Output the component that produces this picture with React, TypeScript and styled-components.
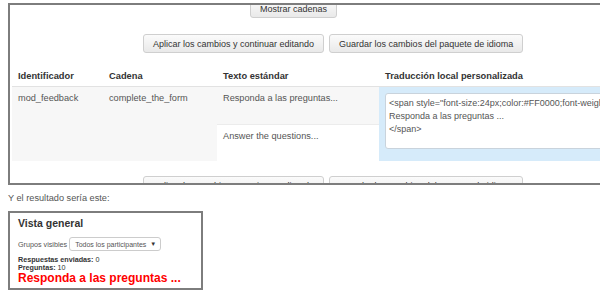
import React from 'react'
import styled, { createGlobalStyle } from 'styled-components'

const Global = createGlobalStyle`
  html, body {
    margin: 0;
    padding: 0;
    background: #fff;
    font-family: "Liberation Sans", Arial, sans-serif;
    color: #333;
  }
`

const Page = styled.div`
  width: 600px;
  height: 290px;
  overflow: hidden;
  padding: 3px 0 0 8px;
  box-sizing: border-box;
`

const Shot = styled.div`
  width: 640px;
  height: 182px;
  box-sizing: border-box;
  border: 2px solid #7d7d7d;
  overflow: hidden;
  background: #fff;
`

const Inner = styled.div`
  margin-top: -6px;
`

const ButtonRow = styled.div<{ $left: number; $top: number }>`
  display: flex;
  gap: 5px;
  padding-left: ${(p) => p.$left}px;
  margin-top: ${(p) => p.$top}px;
`

const Button = styled.div`
  height: 19px;
  box-sizing: border-box;
  padding: 0 9px;
  display: flex;
  align-items: center;
  font-size: 9px;
  color: #333;
  border: 1px solid #cfcfcf;
  border-radius: 3px;
  background: linear-gradient(#fbfbfb, #e9e9e9);
  white-space: nowrap;
`

const Table = styled.div`
  margin: 12px 0 0 2px;
  display: grid;
  grid-template-columns: 91px 114px 162px 1fr;
`

const Head = styled.div`
  height: 21px;
  display: flex;
  align-items: center;
  padding-left: 6px;
  font-size: 9.3px;
  font-weight: bold;
  color: #333;
  border-bottom: 1px solid #e2e2e2;
`

const Cell = styled.div`
  background: #f7f7f7;
  height: 74px;
  padding: 6px 0 0 6px;
  box-sizing: border-box;
  font-size: 9.2px;
  color: #555;
`

const SplitCell = styled.div`
  display: flex;
  flex-direction: column;
  height: 74px;
  font-size: 9.2px;
  color: #555;
`

const Part = styled.div<{ $white?: boolean }>`
  flex: 1;
  padding: 6px 0 0 6px;
  background: ${(p) => (p.$white ? '#fff' : '#f7f7f7')};
  border-top: ${(p) => (p.$white ? '1px solid #ececec' : 'none')};
`

const BlueCell = styled.div`
  background: #d6ebfa;
  height: 74px;
  padding: 6px 0 0 6px;
  box-sizing: border-box;
`

const TextArea = styled.div`
  height: 56px;
  box-sizing: border-box;
  background: #fff;
  border: 1px solid #c9d3dc;
  border-radius: 3px;
  padding: 3px 0 0 3px;
  font-size: 9px;
  line-height: 13px;
  color: #555;
  white-space: nowrap;
`

const Caption = styled.p`
  margin: 8px 0 0;
  font-size: 9.2px;
  color: #555;
`

const Result = styled.div`
  margin-top: 8px;
  width: 195px;
  height: 79px;
  box-sizing: border-box;
  border: 2px solid #7d7d7d;
  padding: 4px 0 0 8px;
`

const Title = styled.div`
  font-size: 10.5px;
  font-weight: bold;
  color: #333;
`

const SelectRow = styled.div`
  display: flex;
  align-items: center;
  gap: 2px;
  margin-top: 8px;
  font-size: 7.2px;
  color: #555;
`

const Select = styled.div`
  width: 92px;
  height: 14px;
  box-sizing: border-box;
  border: 1px solid #ccc;
  border-radius: 3px;
  display: flex;
  align-items: center;
  justify-content: space-between;
  padding: 0 4px 0 5px;
  font-size: 7px;
  color: #555;
`

const Caret = styled.span`
  font-size: 6px;
  color: #333;
`

const Stats = styled.div`
  margin-top: 5px;
`

const Stat = styled.div`
  font-size: 7.2px;
  line-height: 8px;
  color: #333;
  b {
    font-weight: bold;
  }
`

const Red = styled.div`
  font-size: 12px;
  font-weight: bold;
  color: #ff0000;
  line-height: 13px;
`

export default function App() {
  return (
    <>
      <Global />
      <Page>
        <Shot>
          <Inner>
            <ButtonRow $left={240} $top={0}>
              <Button>Mostrar cadenas</Button>
            </ButtonRow>
            <ButtonRow $left={133} $top={16}>
              <Button>Aplicar los cambios y continuar editando</Button>
              <Button>Guardar los cambios del paquete de idioma</Button>
            </ButtonRow>
            <Table>
              <Head>Identificador</Head>
              <Head>Cadena</Head>
              <Head>Texto estándar</Head>
              <Head>Traducción local personalizada</Head>
              <Cell>mod_feedback</Cell>
              <Cell>complete_the_form</Cell>
              <SplitCell>
                <Part>Responda a las preguntas...</Part>
                <Part $white>Answer the questions...</Part>
              </SplitCell>
              <BlueCell>
                <TextArea>
                  &lt;span style="font-size:24px;color:#FF0000;font-weight:bold;"&gt;
                  <br />
                  Responda a las preguntas ...
                  <br />
                  &lt;/span&gt;
                </TextArea>
              </BlueCell>
            </Table>
            <ButtonRow $left={133} $top={15}>
              <Button>Aplicar los cambios y continuar editando</Button>
              <Button>Guardar los cambios del paquete de idioma</Button>
            </ButtonRow>
          </Inner>
        </Shot>
        <Caption>Y el resultado sería este:</Caption>
        <Result>
          <Title>Vista general</Title>
          <SelectRow>
            Grupos visibles
            <Select>
              Todos los participantes <Caret>▼</Caret>
            </Select>
          </SelectRow>
          <Stats>
            <Stat>
              <b>Respuestas enviadas:</b> 0
            </Stat>
            <Stat>
              <b>Preguntas:</b> 10
            </Stat>
            <Red>Responda a las preguntas ...</Red>
          </Stats>
        </Result>
      </Page>
    </>
  )
}
